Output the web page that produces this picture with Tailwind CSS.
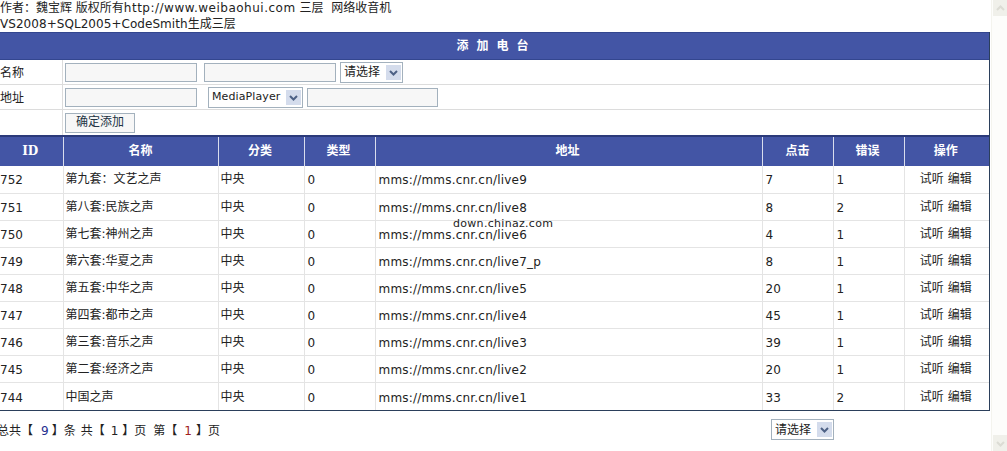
<!DOCTYPE html>
<html>
<head>
<meta charset="utf-8" />
<title>网络收音机</title>
<script src="https://cdn.jsdelivr.net/npm/@tailwindcss/browser@4"></script>
</head>
<body class="flex h-[451px] overflow-hidden bg-white text-[12px] text-[#222] font-['DejaVu_Sans','Noto_Sans_CJK_SC',sans-serif]">
<div class="relative -ml-[3px] w-[994px] shrink-0">
  <div class="h-[32px] pl-[3px] leading-[16px]">
    <p>作者：魏宝辉 版权所有<span class="tracking-[0.5px]">http://www.weibaohui.com</span> 三层<span class="ml-[4px]"> 网络收音机</span></p>
    <p class="tracking-[0.05px]">VS2008+SQL2005+CodeSmith生成三层</p>
  </div>

  <div class="w-[993px] border-r border-b border-[#2b3f5b]">
    <div class="flex h-[28px] items-center justify-center border-y border-[#33468f] bg-[#4355a5] pl-[7px] text-[12px] font-bold tracking-[8px] text-white">添加电台</div>

    <div class="flex h-[25px] border-b border-[#dcdcdc]">
      <div class="flex w-[66px] items-center border-r border-[#dcdcdc] pl-[3px] pt-[1px]">名称</div>
      <div class="flex items-center pl-[2px]">
        <input class="h-[19px] w-[132px] border border-[#a3b1bd] bg-[#f7f7f7]" />
        <input class="ml-[7px] h-[19px] w-[132px] border border-[#a3b1bd] bg-[#f7f7f7]" />
        <div class="relative ml-[4px] h-[21px] w-[63px]">
          <select class="h-full w-full appearance-none border border-[#a3b1bd] bg-white pl-[3px] text-[12px]"><option>请选择</option></select>
          <svg class="absolute right-[2px] top-[3px] h-[15px] w-[15px]" viewBox="0 0 15 15"><rect width="15" height="15" fill="#d4dcec"/><path d="M4 6l3.5 3.5L11 6" fill="none" stroke="#4d6185" stroke-width="2"/></svg>
        </div>
      </div>
    </div>
    <div class="flex h-[25px] border-b border-[#dcdcdc]">
      <div class="flex w-[66px] items-center border-r border-[#dcdcdc] pl-[3px] pt-[1px]">地址</div>
      <div class="flex items-center pl-[2px]">
        <input class="h-[19px] w-[132px] border border-[#a3b1bd] bg-[#f7f7f7]" />
        <div class="relative ml-[11px] h-[21px] w-[95px]">
          <select class="h-full w-full appearance-none border border-[#a3b1bd] bg-white pl-[3px] text-[11px] tracking-[0.1px]"><option>MediaPlayer</option></select>
          <svg class="absolute right-[2px] top-[3px] h-[15px] w-[15px]" viewBox="0 0 15 15"><rect width="15" height="15" fill="#d4dcec"/><path d="M4 6l3.5 3.5L11 6" fill="none" stroke="#4d6185" stroke-width="2"/></svg>
        </div>
        <input class="ml-[4px] h-[19px] w-[131px] border border-[#a3b1bd] bg-[#f7f7f7]" />
      </div>
    </div>
    <div class="flex h-[25px]">
      <div class="w-[66px] border-r border-[#dcdcdc]"></div>
      <div class="flex items-center pl-[2px]">
        <button class="mb-[-1px] h-[20px] w-[70px] border border-[#a3b1bd] bg-[#f7f7f7] pb-[2px] text-[12px] leading-[16px] text-[#234]">确定添加</button>
      </div>
    </div>

    <table class="w-[992px] table-fixed border-collapse">
      <colgroup>
        <col class="w-[66px]" /><col class="w-[155px]" /><col class="w-[86px]" /><col class="w-[71px]" /><col class="w-[387px]" /><col class="w-[71px]" /><col class="w-[71px]" /><col />
      </colgroup>
      <thead>
        <tr class="h-[30px] border-t-2 border-[#2b3a7a] bg-[#4355a5] text-[12px] font-bold text-white">
          <th class="border-r border-white/80 pb-[2px] pl-[1px] font-['DejaVu_Serif',serif]">ID</th>
          <th class="border-r border-white/80 pb-[2px]">名称</th>
          <th class="border-r border-white/80 pb-[2px] pr-[2px]">分类</th>
          <th class="border-r border-white/80 pb-[2px] pr-[2px]">类型</th>
          <th class="border-r border-white/80 pb-[2px] pr-[2px]">地址</th>
          <th class="border-r border-white/80 pb-[2px]">点击</th>
          <th class="border-r border-white/80 pb-[2px] pr-[2px]">错误</th>
          <th class="pb-[2px] pr-[2px]">操作</th>
        </tr>
      </thead>
      <tbody class="[&_td]:border-r [&_td]:border-[#e4e4e4] [&_td]:pl-[3px] [&_td]:pt-[2px] [&_td.cn]:pl-[2px] [&_td.cn]:pt-0 [&_td.op]:pl-0 [&_td.op]:pr-[2px] [&_td.op]:text-center [&_td:last-child]:border-r-0 [&_tr]:h-[27.1px] [&_tr]:border-b [&_tr]:border-[#e4e4e4] [&_tr:last-child]:border-b-0 [&_i]:not-italic [&_i]:tracking-[0.2px]">
        <tr><td>752</td><td class="cn">第九套：文艺之声</td><td class="cn">中央</td><td>0</td><td><i>mms://mms.cnr.cn/live9</i></td><td>7</td><td>1</td><td class="cn op">试听 编辑</td></tr>
        <tr><td>751</td><td class="cn">第八套:民族之声</td><td class="cn">中央</td><td>0</td><td><i>mms://mms.cnr.cn/live8</i></td><td>8</td><td>2</td><td class="cn op">试听 编辑</td></tr>
        <tr><td>750</td><td class="cn">第七套:神州之声</td><td class="cn">中央</td><td>0</td><td><i>mms://mms.cnr.cn/live6</i></td><td>4</td><td>1</td><td class="cn op">试听 编辑</td></tr>
        <tr><td>749</td><td class="cn">第六套:华夏之声</td><td class="cn">中央</td><td>0</td><td><i>mms://mms.cnr.cn/live7_p</i></td><td>8</td><td>1</td><td class="cn op">试听 编辑</td></tr>
        <tr><td>748</td><td class="cn">第五套:中华之声</td><td class="cn">中央</td><td>0</td><td><i>mms://mms.cnr.cn/live5</i></td><td>20</td><td>1</td><td class="cn op">试听 编辑</td></tr>
        <tr><td>747</td><td class="cn">第四套:都市之声</td><td class="cn">中央</td><td>0</td><td><i>mms://mms.cnr.cn/live4</i></td><td>45</td><td>1</td><td class="cn op">试听 编辑</td></tr>
        <tr><td>746</td><td class="cn">第三套:音乐之声</td><td class="cn">中央</td><td>0</td><td><i>mms://mms.cnr.cn/live3</i></td><td>39</td><td>1</td><td class="cn op">试听 编辑</td></tr>
        <tr><td>745</td><td class="cn">第二套:经济之声</td><td class="cn">中央</td><td>0</td><td><i>mms://mms.cnr.cn/live2</i></td><td>20</td><td>1</td><td class="cn op">试听 编辑</td></tr>
        <tr><td>744</td><td class="cn">中国之声</td><td class="cn">中央</td><td>0</td><td><i>mms://mms.cnr.cn/live1</i></td><td>33</td><td>2</td><td class="cn op">试听 编辑</td></tr>
      </tbody>
    </table>
  </div>

  <div class="flex h-[38px] w-[993px] items-center">
    <div class="flex w-[774px] pt-[3px]">
      <span>总共【</span><span class="ml-[8px] text-[#1f2f8f]">9</span><span class="ml-[3px]">】条</span><span class="ml-[5px]">共【</span><span class="ml-[6px]">1</span><span class="ml-[4px]">】页</span><span class="ml-[7px]">第【</span><span class="ml-[7px] text-[#a02020]">1</span><span class="ml-[4px]">】页</span>
    </div>
    <div class="relative h-[21px] w-[63px]">
      <select class="h-full w-full appearance-none border border-[#a3b1bd] bg-white pl-[3px] text-[12px]"><option>请选择</option></select>
      <svg class="absolute right-[2px] top-[3px] h-[15px] w-[15px]" viewBox="0 0 15 15"><rect width="15" height="15" fill="#d4dcec"/><path d="M4 6l3.5 3.5L11 6" fill="none" stroke="#4d6185" stroke-width="2"/></svg>
    </div>
  </div>

  <div class="absolute left-[456px] top-[217px] text-[11px] leading-[14px] tracking-[0.3px]">down.chinaz.com</div>
</div>

<!-- washed out scrollbar on the right edge -->
<div class="flex h-full flex-1 flex-col justify-between border-l border-[#f4f4ee] bg-[#fdfdfb] pl-[1px]">
  <div class="flex h-[16px] w-[14px] items-center justify-center bg-[#f0f0ea]">
    <svg class="h-[9px] w-[9px]" viewBox="0 0 9 9"><path d="M1 6l3.5-3.5L8 6" fill="none" stroke="#dcdcd4" stroke-width="2"/></svg>
  </div>
  <div class="flex h-[16px] w-[14px] items-center justify-center bg-[#f0f0ea]">
    <svg class="h-[9px] w-[9px]" viewBox="0 0 9 9"><path d="M1 3l3.5 3.5L8 3" fill="none" stroke="#dcdcd4" stroke-width="2"/></svg>
  </div>
</div>
</body>
</html>
